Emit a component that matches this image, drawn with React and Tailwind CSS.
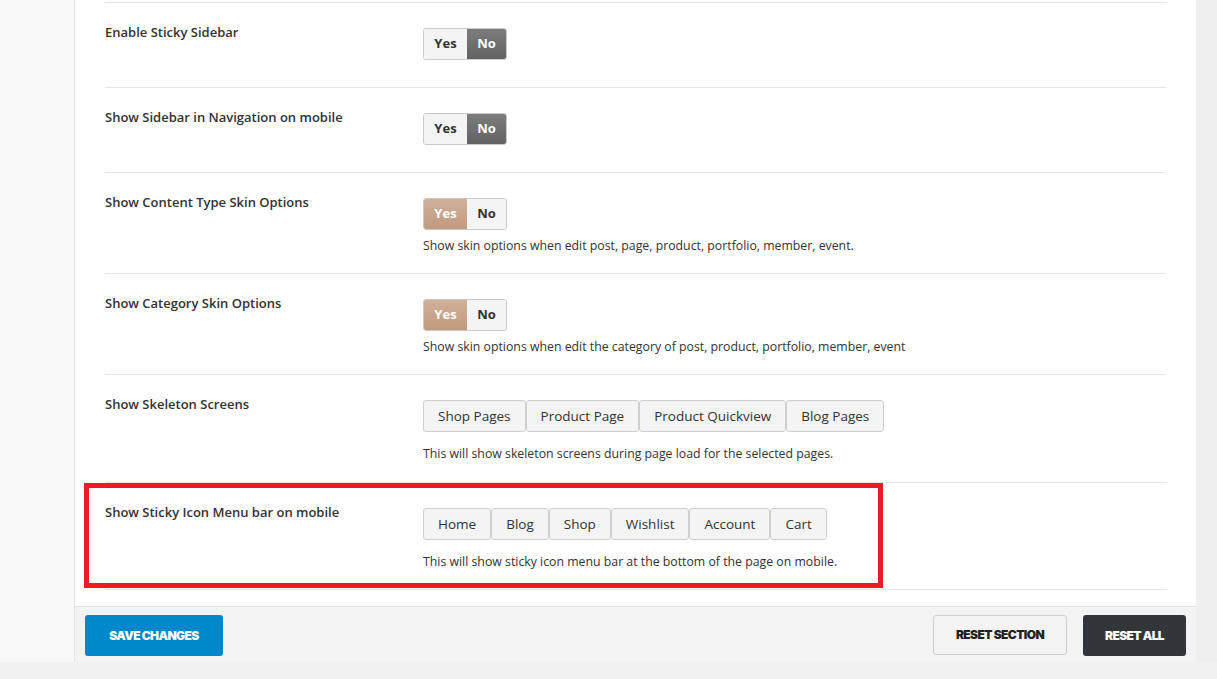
import React from "react";

const font = { fontFamily: '"Open Sans", "Noto Sans", sans-serif' };

function Toggle({ value }) {
  const yesActive = value === "yes";
  return (
    <div className="flex h-[32px] w-[84px] rounded-[3px] border border-[#cacaca] overflow-hidden text-[13px] font-bold">
      <div
        className={
          "w-[43px] flex items-center justify-center " +
          (yesActive
            ? "bg-gradient-to-b from-[#d0b09a] to-[#c09a7e] text-white"
            : "bg-[#f4f4f4] text-[#333]")
        }
      >
        Yes
      </div>
      <div
        className={
          "flex-1 flex items-center justify-center " +
          (!yesActive
            ? "bg-gradient-to-b from-[#7d7d7d] to-[#626262] text-white"
            : "bg-[#f4f4f4] text-[#333]")
        }
      >
        No
      </div>
    </div>
  );
}

function Multi({ items }) {
  return (
    <div className="flex gap-0">
      {items.map((it) => (
        <div
          key={it}
          className="h-[32px] px-[14px] flex items-center rounded-[3px] border border-[#cfcfcf] bg-[#f4f4f4] text-[13.5px] text-[#333]"
        >
          {it}
        </div>
      ))}
    </div>
  );
}

function Row({ label, children, highlight }) {
  return (
    <div className="relative flex border-t border-[#e5e5e5]">
      <div className="w-[318px] pt-[19px] text-[13px] leading-[20px] font-semibold text-[#333]">
        {label}
      </div>
      <div className="flex-1 pt-[25px]">{children}</div>
      {highlight && (
        <div className="absolute left-[-21px] top-0 w-[799px] h-[105px] border-[5px] border-[#ed1c24] pointer-events-none" />
      )}
    </div>
  );
}

function Desc({ children, cls }) {
  return (
    <div className={"text-[12.3px] leading-[18px] text-[#333] " + cls}>{children}</div>
  );
}

export default function App() {
  return (
    <div className="w-[1217px] h-[679px] bg-[#f1f1f1] overflow-hidden" style={font}>
      <div className="flex h-[662px]">
        <div className="w-[75px] shrink-0 bg-[#f9f9f9] border-r border-[#e4e4e4]" />
        <div className="w-[1121px] shrink-0 flex flex-col">
          <div className="flex-1 bg-white px-[30px] pt-[2px]">
            <Row label="Enable Sticky Sidebar">
              <div className="pb-[27px]">
                <Toggle value="no" />
              </div>
            </Row>
            <Row label="Show Sidebar in Navigation on mobile">
              <div className="pb-[27px]">
                <Toggle value="no" />
              </div>
            </Row>
            <Row label="Show Content Type Skin Options">
              <Toggle value="yes" />
              <Desc cls="mt-[7px] pb-[18px]">
                Show skin options when edit post, page, product, portfolio, member, event.
              </Desc>
            </Row>
            <Row label="Show Category Skin Options">
              <Toggle value="yes" />
              <Desc cls="mt-[7px] pb-[18px]">
                Show skin options when edit the category of post, product, portfolio, member, event
              </Desc>
            </Row>
            <Row label="Show Skeleton Screens">
              <Multi items={["Shop Pages", "Product Page", "Product Quickview", "Blog Pages"]} />
              <Desc cls="mt-[13px] pb-[19px]">
                This will show skeleton screens during page load for the selected pages.
              </Desc>
            </Row>
            <Row label="Show Sticky Icon Menu bar on mobile" highlight>
              <Multi items={["Home", "Blog", "Shop", "Wishlist", "Account", "Cart"]} />
              <Desc cls="mt-[13px] pb-[18px]">
                This will show sticky icon menu bar at the bottom of the page on mobile.
              </Desc>
            </Row>
            <div className="border-t border-[#e5e5e5]" />
          </div>
          <div className="h-[56px] shrink-0 bg-[#f3f3f3] border-t border-[#e3e3e3] flex items-start justify-between px-[10px] pt-[8px]">
            <button
              className="h-[41px] w-[138px] rounded-[3px] bg-[#0088cc] text-white text-[12px] font-black uppercase tracking-[-0.05em]"
              style={{ fontFamily: "Inter, sans-serif" }}
            >
              Save Changes
            </button>
            <div className="flex gap-[16px]">
              <button
                className="h-[40px] w-[134px] rounded-[3px] border border-[#cdcdcd] bg-[#f3f3f3] text-[#222] text-[12px] font-black uppercase tracking-[-0.05em]"
                style={{ fontFamily: "Inter, sans-serif" }}
              >
                Reset Section
              </button>
              <button
                className="h-[41px] w-[103px] rounded-[3px] bg-[#32363a] text-white text-[12px] font-black uppercase tracking-[-0.05em]"
                style={{ fontFamily: "Inter, sans-serif" }}
              >
                Reset All
              </button>
            </div>
          </div>
        </div>
        <div className="flex-1 bg-[#efefef]" />
      </div>
    </div>
  );
}
